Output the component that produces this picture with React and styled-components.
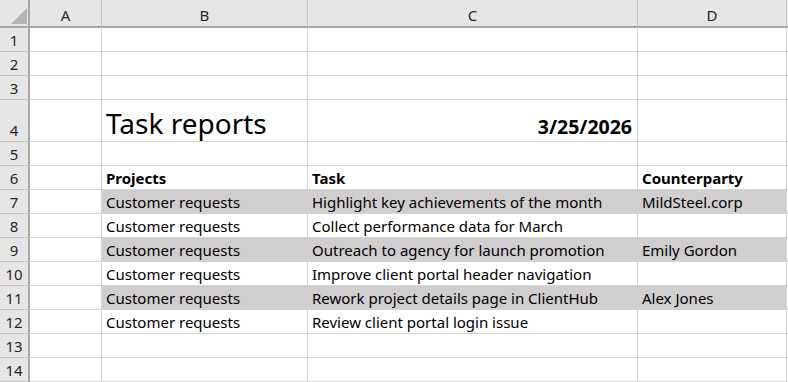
import React from "react";
import styled, { createGlobalStyle } from "styled-components";

const GlobalStyle = createGlobalStyle`
  html, body {
    margin: 0;
    padding: 0;
    background: #ffffff;
  }
  body {
    font-family: "Noto Sans", "Open Sans", "Liberation Sans", sans-serif;
    overflow: hidden;
  }
`;

const COLUMNS = ["A", "B", "C", "D", ""];

const ROWS = [
  { n: 1 },
  { n: 2 },
  { n: 3 },
  { n: 4, tall: true, title: "Task reports", date: "3/25/2026" },
  { n: 5 },
  { n: 6, bold: true, cells: ["Projects", "Task", "Counterparty"] },
  { n: 7, shaded: true, cells: ["Customer requests", "Highlight key achievements of the month", "MildSteel.corp"] },
  { n: 8, cells: ["Customer requests", "Collect performance data for March", ""] },
  { n: 9, shaded: true, cells: ["Customer requests", "Outreach to agency for launch promotion", "Emily Gordon"] },
  { n: 10, cells: ["Customer requests", "Improve client portal header navigation", ""] },
  { n: 11, shaded: true, cells: ["Customer requests", "Rework project details page in ClientHub", "Alex Jones"] },
  { n: 12, cells: ["Customer requests", "Review client portal login issue", ""] },
  { n: 13 },
  { n: 14 },
];

const App = () => {
  return (
    <>
      <GlobalStyle />
      <Sheet>
        <Corner>
          <svg width="30" height="28" viewBox="0 0 30 28">
            <polygon points="11,24 27,24 27,8" fill="#b4b4b4" />
          </svg>
        </Corner>
        {COLUMNS.map((c, i) => (
          <ColHead key={i} $last={i === COLUMNS.length - 1}>
            {c}
          </ColHead>
        ))}

        {ROWS.map((row) => {
          const cells = row.cells || [];
          return (
            <React.Fragment key={row.n}>
              <RowHead>{row.n}</RowHead>
              <Cell />
              {row.title ? (
                <>
                  <Cell>
                    <Title>{row.title}</Title>
                  </Cell>
                  <Cell $right>
                    <DateText>{row.date}</DateText>
                  </Cell>
                  <Cell />
                </>
              ) : (
                [0, 1, 2].map((i) => (
                  <Cell key={i} $shaded={row.shaded} $joined={row.shaded && i < 2}>
                    {cells[i] && <CellText $bold={row.bold}>{cells[i]}</CellText>}
                  </Cell>
                ))
              )}
              <Cell $last />
            </React.Fragment>
          );
        })}
      </Sheet>
    </>
  );
};

// styles
const Sheet = styled.div`
  display: grid;
  grid-template-columns: 30px 72px 206px 330px 149px 1fr;
  grid-template-rows: 28px repeat(3, 24px) 42px repeat(10, 24px);
  width: 788px;
  height: 382px;
  overflow: hidden;
  background: #ffffff;
`;

const Corner = styled.div`
  background: #e6e6e6;
  border-right: 2px solid #a6a6a6;
  border-bottom: 2px solid #a6a6a6;
  box-sizing: border-box;
  svg {
    display: block;
  }
`;

const ColHead = styled.div`
  box-sizing: border-box;
  background: #e6e6e6;
  border-right: 1px solid ${(p) => (p.$last ? "transparent" : "#c6c6c6")};
  border-bottom: 2px solid #a6a6a6;
  color: #262626;
  font-size: 15px;
  display: flex;
  align-items: center;
  justify-content: center;
  padding-top: 3px;
`;

const RowHead = styled.div`
  box-sizing: border-box;
  background: #e6e6e6;
  border-right: 2px solid #a6a6a6;
  border-bottom: 1px solid #c6c6c6;
  color: #262626;
  font-size: 15px;
  line-height: 18px;
  display: flex;
  align-items: flex-end;
  justify-content: center;
  padding-bottom: 2px;
`;

const Cell = styled.div`
  box-sizing: border-box;
  background: ${(p) => (p.$shaded ? "#d0cece" : "#ffffff")};
  border-right: 1px solid
    ${(p) => (p.$last ? "transparent" : p.$joined ? "#d0cece" : "#d4d4d4")};
  border-bottom: 1px solid #d4d4d4;
  display: flex;
  align-items: flex-end;
  justify-content: ${(p) => (p.$right ? "flex-end" : "flex-start")};
  padding: 0 4px 2px 4px;
  white-space: nowrap;
  color: #000000;
`;

const CellText = styled.span`
  font-size: 15px;
  line-height: 18px;
  font-weight: ${(p) => (p.$bold ? 700 : 400)};
`;

const Title = styled.span`
  font-size: 28px;
  line-height: 34px;
  margin-bottom: -1px;
`;

const DateText = styled.span`
  font-size: 19.5px;
  line-height: 24px;
  font-weight: 700;
  margin-right: 1px;
`;

export default App;
